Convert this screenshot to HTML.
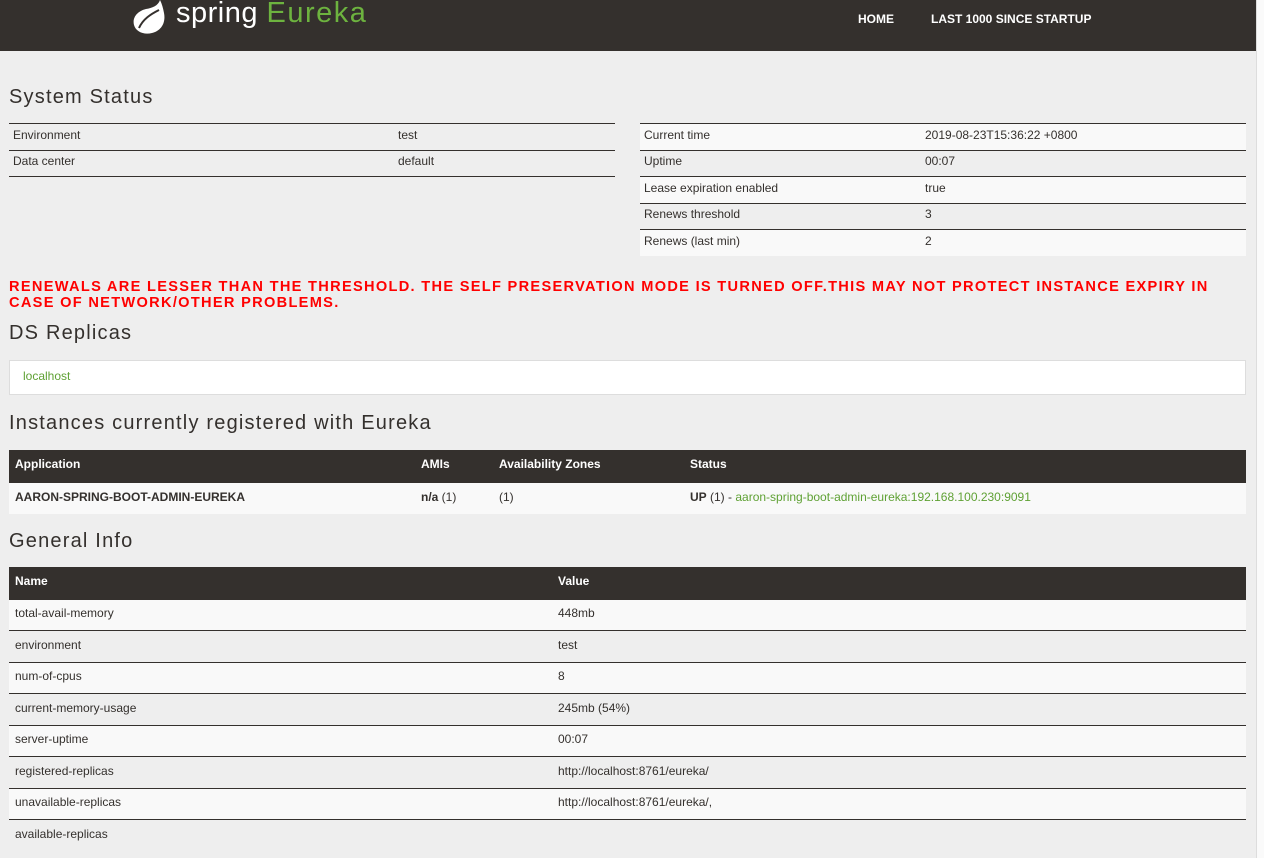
<!DOCTYPE html>
<html><head><style>
*{margin:0;padding:0;box-sizing:border-box}
body{width:1264px;height:858px;overflow:hidden;background:#eeeeee;font-family:"Liberation Sans",sans-serif;font-size:12px;color:#34302d;position:relative}
.hdr{position:absolute;left:0;top:0;width:1256px;height:51px;background:#34302d}
.sb{position:absolute;left:1256px;top:0;width:8px;height:858px;background:#fafafa;border-left:1px solid #ddd}
.nav{position:absolute;top:12px;color:#fff;font-weight:bold;font-size:12px}
h2{position:absolute;left:9px;font-size:20px;font-weight:normal;color:#34302d;letter-spacing:1.2px}
table{position:absolute;border-collapse:collapse}
td,th{text-align:left;padding:0 6px;vertical-align:middle}
.ss td{height:26.5px;border-top:1px solid #34302d;padding-bottom:4px}
.ss td:first-child{padding-left:4px}
.st tr:nth-child(odd) td{background:#f9f9f9}
.dark th{background:#34302d;color:#fff;font-weight:bold;height:32px;padding-bottom:3px}
.dark td{height:31.5px;border-top:1px solid #34302d;padding-bottom:3px}
.dark tr:nth-child(even) td{background:#f9f9f9}
.g{color:#5fa134}
</style></head><body>
<div class="hdr">
<svg style="position:absolute;left:130px;top:0" width="38" height="34" viewBox="0 0 38 34"><path d="M30 0c-2 6-8 8-14 9C8 11 2 17 4 25c2 7 10 10 18 8 9-2 14-10 12-20-1-5-2-9-4-13z" fill="#fff"/><path d="M9 28c4-9 12-14 20-18" stroke="#34302d" stroke-width="2" fill="none"/></svg>
<div style="position:absolute;left:176px;top:-3px;font-size:29px;color:#fff;letter-spacing:0.5px">spring <span style="color:#6db33f;letter-spacing:1.5px">Eureka</span></div>
<div class="nav" style="left:858px">HOME</div>
<div class="nav" style="left:931px">LAST 1000 SINCE STARTUP</div>
</div>
<div class="sb"></div>
<h2 style="top:86px">System Status</h2>
<table class="ss" style="left:9px;top:123px;width:606px"><tr><td style="width:383px">Environment</td><td>test</td></tr><tr><td>Data center</td><td>default</td></tr><tr><td style="border-top:1px solid #34302d;height:0;padding:0"></td><td style="height:0;padding:0;border-top:1px solid #34302d"></td></tr></table>
<table class="ss st" style="left:640px;top:123px;width:606px"><tr><td style="width:279px">Current time</td><td>2019-08-23T15:36:22 +0800</td></tr><tr><td>Uptime</td><td>00:07</td></tr><tr><td>Lease expiration enabled</td><td>true</td></tr><tr><td>Renews threshold</td><td>3</td></tr><tr><td>Renews (last min)</td><td>2</td></tr></table>
<div style="position:absolute;left:9px;top:279px;width:1237px;color:#ff0000;font-weight:bold;font-size:14.6px;line-height:16px;letter-spacing:1.3px">RENEWALS ARE LESSER THAN THE THRESHOLD. THE SELF PRESERVATION MODE IS TURNED OFF.THIS MAY NOT PROTECT INSTANCE EXPIRY IN CASE OF NETWORK/OTHER PROBLEMS.</div>
<h2 style="top:322px">DS Replicas</h2>
<div style="position:absolute;left:9px;top:360px;width:1237px;height:35px;background:#fff;border:1px solid #ddd;padding:8px 13px" class="g">localhost</div>
<h2 style="top:412px">Instances currently registered with Eureka</h2>
<table class="dark" style="left:9px;top:450px;width:1237px"><tr><th style="width:406px">Application</th><th style="width:78px">AMIs</th><th style="width:191px">Availability Zones</th><th>Status</th></tr><tr><td><b>AARON-SPRING-BOOT-ADMIN-EUREKA</b></td><td><b>n/a</b> (1)</td><td>(1)</td><td><b>UP</b> (1) - <span class="g">aaron-spring-boot-admin-eureka:192.168.100.230:9091</span></td></tr></table>
<h2 style="top:530px">General Info</h2>
<table class="dark" style="left:9px;top:567px;width:1237px"><tr><th style="width:543px">Name</th><th>Value</th></tr>
<tr><td>total-avail-memory</td><td>448mb</td></tr>
<tr><td>environment</td><td>test</td></tr>
<tr><td>num-of-cpus</td><td>8</td></tr>
<tr><td>current-memory-usage</td><td>245mb (54%)</td></tr>
<tr><td>server-uptime</td><td>00:07</td></tr>
<tr><td>registered-replicas</td><td>http://localhost:8761/eureka/</td></tr>
<tr><td>unavailable-replicas</td><td>http://localhost:8761/eureka/,</td></tr>
<tr><td>available-replicas</td><td></td></tr>
</table>
</body></html>
